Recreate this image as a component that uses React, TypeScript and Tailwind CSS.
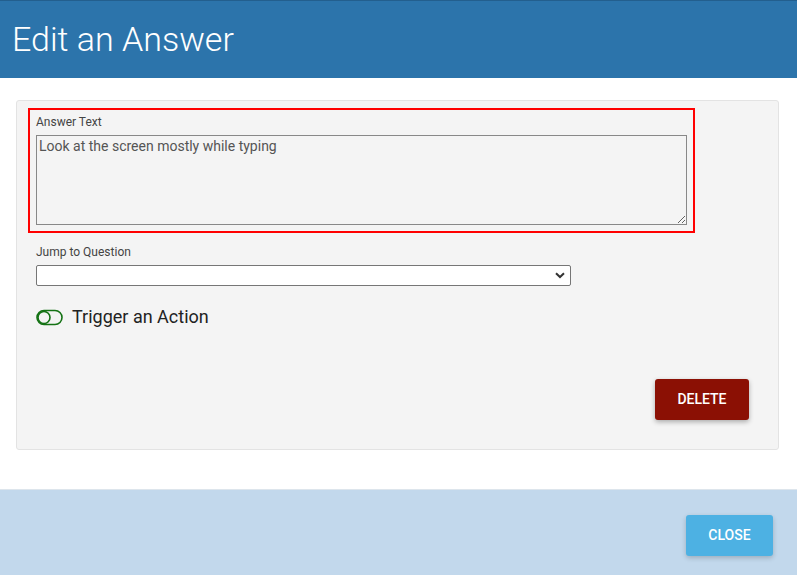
import React from "react";

export default function App() {
  return (
    <div className="w-[797px] h-[575px] bg-white flex flex-col overflow-hidden" style={{ fontFamily: "Roboto, 'Liberation Sans', sans-serif" }}>
      <div className="h-[78px] bg-[#2c74ab] border-t border-[#235f8e] flex items-center px-[12px] shrink-0">
        <h1 className="text-white text-[34px] font-light leading-none mt-[-2px]">Edit an Answer</h1>
      </div>
      <div className="flex-1 pt-[22px] pl-[16px] pr-[18px]">
        <div className="h-[350px] bg-[#f4f4f4] border border-[#e3e3e3] rounded-[3px] pt-[7px] pl-[11px] pr-[83px] flex flex-col">
          <div className="border-2 border-[#ff0000] pl-[6px] pr-[6px] pt-[4px] pb-[6px] flex flex-col">
            <label className="text-[12px] text-[#444] leading-[17px]">Answer Text</label>
            <textarea
              readOnly
              defaultValue="Look at the screen mostly while typing"
              className="mt-[4px] h-[90px] w-full border border-[#888] bg-[#f4f4f4] text-[14px] text-[#555] px-[2px] py-[1px] leading-[18px] outline-none resize"
              style={{ fontFamily: "Roboto, 'Liberation Sans', sans-serif" }}
            />
          </div>
          <label className="text-[12px] text-[#444] leading-[17px] ml-[8px] mt-[11px]">Jump to Question</label>
          <div className="ml-[8px] mt-[4px] w-[535px] h-[21px] bg-white border border-[#767676] rounded-[2px] flex items-center justify-end pr-[5px]">
            <svg width="10" height="7" viewBox="0 0 10 7">
              <path d="M1 1.2 L5 5 L9 1.2" fill="none" stroke="#333" strokeWidth="2" />
            </svg>
          </div>
          <div className="ml-[8px] mt-[22px] flex items-center gap-[9px]">
            <svg width="27" height="17" viewBox="0 0 27 17">
              <rect x="1" y="1.5" width="25" height="14" rx="7" fill="none" stroke="#147214" strokeWidth="1.6" />
              <circle cx="8" cy="8.5" r="6" fill="none" stroke="#147214" strokeWidth="1.6" />
            </svg>
            <span className="text-[18px] text-[#222] leading-none">Trigger an Action</span>
          </div>
          <div className="flex justify-end mt-[53px] mr-[-54px]">
            <button className="w-[94px] h-[41px] bg-[#8b1004] text-white text-[14px] font-medium rounded-[3px] shadow-[0_2px_5px_rgba(0,0,0,0.3)]">DELETE</button>
          </div>
        </div>
      </div>
      <div className="h-[86px] bg-[#c2d8ec] border-t border-[#dde5ec] flex items-start justify-end pt-[25px] pr-[24px] shrink-0">
        <button className="w-[87px] h-[41px] bg-[#4db1e3] text-white text-[14px] font-medium rounded-[3px] shadow-[0_2px_5px_rgba(0,0,0,0.2)]">CLOSE</button>
      </div>
    </div>
  );
}
